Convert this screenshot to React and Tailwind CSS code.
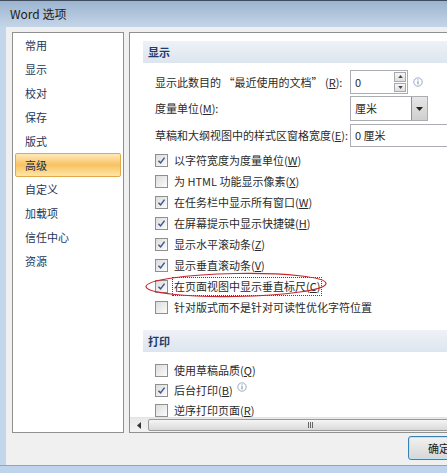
import React from "react";

const navItems = ["常用", "显示", "校对", "保存", "版式", "高级", "自定义", "加载项", "信任中心", "资源"];

const displayChecks = [
  { on: true, text: "以字符宽度为度量单位", key: "W" },
  { on: false, text: "为 HTML 功能显示像素", key: "X" },
  { on: true, text: "在任务栏中显示所有窗口", key: "W" },
  { on: true, text: "在屏幕提示中显示快捷键", key: "H" },
  { on: true, text: "显示水平滚动条", key: "Z" },
  { on: true, text: "显示垂直滚动条", key: "V" },
  { on: true, text: "在页面视图中显示垂直标尺", key: "C", focus: true },
  { on: false, text: "针对版式而不是针对可读性优化字符位置" },
];

const printChecks = [
  { on: false, text: "使用草稿品质", key: "Q" },
  { on: true, text: "后台打印", key: "B", info: true },
  { on: false, text: "逆序打印页面", key: "R" },
];

function Info({ className = "" }) {
  return (
    <svg viewBox="0 0 10 10" className={"w-[10px] h-[10px] " + className}>
      <circle cx="5" cy="5" r="4.2" fill="#fff" stroke="#8ea3bf" strokeWidth="0.9" />
      <rect x="4.5" y="4.2" width="1" height="3.2" fill="#6f86a8" />
      <rect x="4.5" y="2.4" width="1" height="1" fill="#6f86a8" />
    </svg>
  );
}

function Check({ on }) {
  return (
    <span className="w-[13px] h-[13px] border border-[#8e8f8f] bg-linear-to-br from-[#dcdcdc] to-[#fcfcfc] flex items-center justify-center shrink-0">
      {on && (
        <svg viewBox="0 0 10 10" className="w-[9px] h-[9px]">
          <path d="M1.6 5.2 L4 7.6 L8.4 1.8" fill="none" stroke="#3f5a8c" strokeWidth="1.7" />
        </svg>
      )}
    </span>
  );
}

function Label({ text, k }) {
  return (
    <>
      {text}
      {k && (
        <>
          (<span className="underline underline-offset-1">{k}</span>)
        </>
      )}
    </>
  );
}

function CheckRow({ item, h }) {
  return (
    <div className={"relative flex items-center gap-[5px] " + h}>
      <Check on={item.on} />
      <span
        className={
          "leading-[17px] px-[1px] " +
          (item.focus ? "outline outline-1 outline-dotted outline-[#444]" : "")
        }
      >
        <Label text={item.text} k={item.key} />
      </span>
      {item.info && <Info className="self-start mt-[2px] -ml-[2px]" />}
      {item.focus && (
        <svg
          viewBox="0 0 184 28"
          className="absolute left-[-11px] top-[-5px] w-[184px] h-[28px] -rotate-1 overflow-visible"
        >
          <ellipse cx="92" cy="14" rx="90" ry="11.5" fill="none" stroke="#c9252f" strokeWidth="1.2" />
        </svg>
      )}
    </div>
  );
}

function Header({ children }) {
  return (
    <div className="h-[22px] flex items-center pl-[5px] bg-linear-to-b from-[#eef2f7] to-[#dde5ee] font-bold text-[#1f3b6b]">
      {children}
    </div>
  );
}

export default function App() {
  return (
    <div className="w-[447px] h-[473px] overflow-hidden bg-[#f0f0f0] font-['Noto_Sans_CJK_SC','Noto_Sans',sans-serif] text-[11px] text-[#2a2a2a]">
      <div className="w-[580px] h-[473px] flex flex-col">
        {/* title bar */}
        <div className="h-[27px] shrink-0 border-t border-[#3f4d5e] bg-linear-to-b from-[#9cb4d0] to-[#c4d5e8] flex items-center pl-[10px] text-[12px] text-[#1b1b1b]">
          Word 选项
        </div>

        {/* body */}
        <div className="flex-1 flex flex-col border-l-[6px] border-l-[#c2d6ec] border-r-[6px] border-r-[#c2d6ec]">
          <div className="flex gap-[5px] pt-[5px] pl-[6px] pr-[6px]">
            {/* nav */}
            <div className="w-[112px] h-[401px] shrink-0 bg-white border border-[#8f9090] text-[#1e3557]">
              {navItems.map((n) =>
                n === "高级" ? (
                  <div
                    key={n}
                    className="h-[24px] mx-[2px] flex items-center pl-[9px] rounded-[2px] border border-[#e3a84a] bg-linear-to-b from-[#fde9b8] via-[#f8c261] to-[#fee6a4] text-[#1e2c44]"
                  >
                    {n}
                  </div>
                ) : (
                  <div key={n} className="h-[24px] flex items-center pl-[12px]">
                    {n}
                  </div>
                )
              )}
            </div>

            {/* content panel */}
            <div className="flex-1 h-[401px] bg-white border border-[#8f9090] flex flex-col">
              <div className="flex-1 overflow-hidden pt-[8px] pl-[13px] pr-[10px]">
                <Header>显示</Header>
                <div className="pl-[12px]">
                  <div className="mt-[7px] h-[24px] flex items-center">
                    <span className="w-[195px]">
                      显示此数目的 “最近使用的文档” (<span className="underline underline-offset-1">R</span>):
                    </span>
                    <div className="h-[24px] w-[58px] flex border border-[#abadb3] bg-white">
                      <span className="flex-1 pl-[4px] flex items-center">0</span>
                      <div className="w-[14px] flex flex-col gap-[1px] p-[1px]">
                        <div className="flex-1 border border-[#a5a9b0] bg-linear-to-b from-[#f7f7f7] to-[#dedede] flex items-center justify-center">
                          <svg viewBox="0 0 6 4" className="w-[5px] h-[3px]"><path d="M0 4 L3 0 L6 4 Z" fill="#444" /></svg>
                        </div>
                        <div className="flex-1 border border-[#a5a9b0] bg-linear-to-b from-[#f7f7f7] to-[#dedede] flex items-center justify-center">
                          <svg viewBox="0 0 6 4" className="w-[5px] h-[3px]"><path d="M0 0 L3 4 L6 0 Z" fill="#444" /></svg>
                        </div>
                      </div>
                    </div>
                    <Info className="ml-[5px]" />
                  </div>
                  <div className="mt-[2px] h-[25px] flex items-center">
                    <span className="w-[195px]">
                      度量单位(<span className="underline underline-offset-1">M</span>):
                    </span>
                    <div className="h-[25px] w-[78px] flex border border-[#abadb3] bg-white">
                      <span className="flex-1 pl-[4px] flex items-center">厘米</span>
                      <div className="w-[16px] border-l border-[#8b8f96] bg-linear-to-b from-[#e6e6e6] to-[#cfcfcf] flex items-center justify-center">
                        <svg viewBox="0 0 7 4" className="w-[7px] h-[4px]"><path d="M0 0 L3.5 4 L7 0 Z" fill="#222" /></svg>
                      </div>
                    </div>
                  </div>
                  <div className="mt-[3px] h-[23px] flex items-center">
                    <span className="w-[195px]">
                      草稿和大纲视图中的样式区窗格宽度(<span className="underline underline-offset-1">E</span>):
                    </span>
                    <div className="h-[23px] w-[130px] flex items-center pl-[4px] border border-[#abadb3] bg-white">
                      0 厘米
                    </div>
                  </div>
                  <div className="mt-[3px]">
                    {displayChecks.map((c, i) => (
                      <CheckRow key={i} item={c} h="h-[21px]" />
                    ))}
                  </div>
                </div>

                <div className="mt-[12px]">
                  <Header>打印</Header>
                </div>
                <div className="pl-[12px] mt-[8px]">
                  {printChecks.map((c, i) => (
                    <CheckRow key={i} item={c} h="h-[20px]" />
                  ))}
                </div>
              </div>

              {/* horizontal scrollbar */}
              <div className="h-[15px] shrink-0 flex items-stretch border-t border-[#e3e3e3] bg-linear-to-b from-[#e8e8e8] to-[#f3f3f3] px-[1px]">
                <div className="w-[16px] flex items-center justify-center">
                  <svg viewBox="0 0 4 7" className="w-[4px] h-[7px]"><path d="M4 0 L0 3.5 L4 7 Z" fill="#333" /></svg>
                </div>
                <div className="w-[324px] my-[1px] ml-[1px] rounded-[2px] border border-[#9a9a9a] bg-linear-to-b from-[#f5f5f5] to-[#d9d9d9] flex items-center justify-center">
                  <span className="flex gap-[1px]">
                    <span className="w-[1px] h-[6px] bg-[#666]" />
                    <span className="w-[1px] h-[6px] bg-[#666]" />
                    <span className="w-[1px] h-[6px] bg-[#666]" />
                  </span>
                </div>
              </div>
            </div>
          </div>

          {/* buttons */}
          <div className="flex justify-end gap-[6px] pr-[36px] mt-[3px]">
            <button className="w-[62px] h-[24px] rounded-[3px] border border-[#3c7fb1] bg-linear-to-b from-[#f2f2f2] to-[#d6d6d6] shadow-[inset_0_0_0_1px_#bfe4f8] text-[11px] text-[#1a1a1a]">
              确定
            </button>
            <button className="w-[62px] h-[24px] rounded-[3px] border border-[#707070] bg-linear-to-b from-[#f2f2f2] to-[#d6d6d6] text-[11px] text-[#1a1a1a]">
              取消
            </button>
          </div>
        </div>

        {/* bottom frame */}
        <div className="h-[8px] shrink-0 border-t border-[#8aa6c4] bg-[#bdd4ec]" />
      </div>
    </div>
  );
}
